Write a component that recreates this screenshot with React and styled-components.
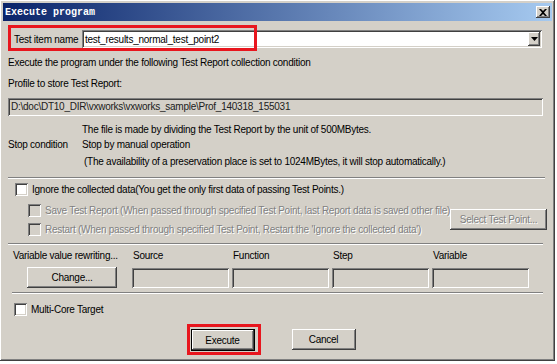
import React from 'react';
import styled, { createGlobalStyle, css } from 'styled-components';

const Global = createGlobalStyle`
  html, body { margin: 0; padding: 0; background: #ffffff; }
  body {
    font-family: "Liberation Sans", Arial, sans-serif;
    font-size: 10px;
    letter-spacing: -0.25px;
    color: #000;
  }
`;

const face = '#D4D0C8';

const raised = css`
  background: ${face};
  box-shadow: inset -1px -1px #404040, inset 1px 1px #ffffff, inset -2px -2px #808080, inset 2px 2px ${face};
`;

const sunken = css`
  box-shadow: inset 1px 1px #808080, inset -1px -1px #ffffff, inset 2px 2px #404040, inset -2px -2px ${face};
`;

const Window = styled.div`
  position: relative;
  width: 555px;
  height: 361px;
  box-sizing: border-box;
  padding: 3px;
  ${raised};
  display: flex;
  flex-direction: column;
  overflow: hidden;
`;

const TitleBar = styled.div`
  flex: none;
  height: 18px;
  display: flex;
  align-items: center;
  justify-content: space-between;
  padding: 0 2px 0 2px;
  background: linear-gradient(to right, #0a246a, #a6caf0);
`;

const TitleText = styled.span`
  font-family: "Liberation Mono", "Courier New", monospace;
  font-weight: bold;
  font-size: 10px;
  color: #ffffff;
  letter-spacing: 0;
`;

const CloseButton = styled.div`
  width: 14px;
  height: 12px;
  ${raised};
  display: flex;
  align-items: center;
  justify-content: center;
`;

const Body = styled.div`
  flex: 1;
  display: flex;
  flex-direction: column;
  padding-left: 5px;
`;

const ComboRow = styled.div`
  display: flex;
  align-items: center;
  margin-top: 9px;
  height: 18px;
  flex: none;
`;

const FieldLabel = styled.span`
  margin-left: 6px;
  width: 68px;
  white-space: nowrap;
`;

const Combo = styled.div`
  width: 460px;
  height: 18px;
  box-sizing: border-box;
  background: #fff;
  ${sunken};
  display: flex;
  align-items: center;
  justify-content: space-between;
  padding: 2px 2px 2px 3px;
  white-space: nowrap;
`;

const DropButton = styled.div`
  width: 12px;
  height: 14px;
  ${raised};
  display: flex;
  align-items: center;
  justify-content: center;
`;

const Line = styled.div`
  flex: none;
  height: 13px;
  line-height: 13px;
  margin-top: ${p => p.$mt || 0}px;
  padding-left: ${p => p.$pl || 0}px;
  white-space: nowrap;
`;

const PathBox = styled.div`
  flex: none;
  margin-top: 8px;
  width: 535px;
  height: 18px;
  box-sizing: border-box;
  ${sunken};
  padding: 3px 3px;
  line-height: 12px;
  color: #202020;
  white-space: nowrap;
`;

const StopRow = styled.div`
  flex: none;
  display: flex;
  height: 13px;
  line-height: 13px;
  margin-top: 2px;
  white-space: nowrap;
`;

const StopLabel = styled.span`
  width: 74px;
`;

const Separator = styled.div`
  flex: none;
  margin-top: ${p => p.$mt}px;
  margin-left: ${p => p.$ml || 0}px;
  width: ${p => p.$w}px;
  height: 0;
  border-top: 1px solid #808080;
  border-bottom: 1px solid #ffffff;
`;

const CheckRow = styled.label`
  flex: none;
  display: flex;
  align-items: center;
  height: 14px;
  margin-top: ${p => p.$mt || 0}px;
  padding-left: ${p => p.$pl || 0}px;
  gap: 4px;
  color: ${p => (p.$disabled ? '#808080' : '#000')};
  text-shadow: ${p => (p.$disabled ? '1px 1px #ffffff' : 'none')};
  white-space: nowrap;
`;

const Box = styled.span`
  width: 13px;
  height: 13px;
  box-sizing: border-box;
  flex: none;
  background: ${p => (p.$disabled ? face : '#fff')};
  ${sunken};
`;

const TestPointGroup = styled.div`
  flex: none;
  display: flex;
  align-items: center;
  justify-content: space-between;
  margin-top: 7px;
  width: 538px;
`;

const SubChecks = styled.div`
  display: flex;
  flex-direction: column;
  gap: 5px;
`;

const Button = styled.div`
  flex: none;
  width: ${p => p.$w}px;
  height: ${p => p.$h || 21}px;
  box-sizing: border-box;
  ${raised};
  display: flex;
  align-items: center;
  justify-content: center;
  white-space: nowrap;
  color: ${p => (p.$disabled ? '#808080' : '#000')};
  text-shadow: ${p => (p.$disabled ? '1px 1px #ffffff' : 'none')};
  ${p => p.$default && css`
    box-shadow: inset 0 0 0 1px #000, inset -2px -2px #404040, inset 2px 2px #ffffff, inset -3px -3px #808080;
  `}
`;

const VarGrid = styled.div`
  flex: none;
  display: grid;
  grid-template-columns: 124px 100px 100px 100px 100px;
  margin-top: 4px;
  align-items: end;
`;

const VarHead = styled.div`
  height: 14px;
  line-height: 14px;
  padding-left: ${p => p.$pl || 0}px;
  align-self: ${p => p.$self || 'end'};
  white-space: nowrap;
`;

const VarBox = styled.div`
  width: 97px;
  height: 20px;
  box-sizing: border-box;
  ${sunken};
  margin-top: 5px;
`;

const ChangeCell = styled.div`
  padding-left: 19px;
  margin-top: 3px;
`;

const Footer = styled.div`
  flex: none;
  display: flex;
  justify-content: center;
  gap: 37px;
  margin-top: 13px;
  padding-right: 14px;
`;

const Highlight = styled.div`
  position: absolute;
  left: ${p => p.$x}px;
  top: ${p => p.$y}px;
  width: ${p => p.$w}px;
  height: ${p => p.$h}px;
  box-sizing: border-box;
  border: 3px solid #e8161e;
  pointer-events: none;
`;

export default function App() {
  return (
    <>
      <Global />
      <Window>
        <TitleBar>
          <TitleText>Execute program</TitleText>
          <CloseButton>
            <svg width="8" height="7" viewBox="0 0 8 7">
              <path d="M0 0h2l2 2 2-2h2L5 3.5 8 7H6L4 5 2 7H0l3-3.5z" fill="#000" />
            </svg>
          </CloseButton>
        </TitleBar>
        <Body>
          <ComboRow>
            <FieldLabel>Test item name</FieldLabel>
            <Combo>
              <span>test_results_normal_test_point2</span>
              <DropButton>
                <svg width="7" height="4" viewBox="0 0 7 4">
                  <path d="M0 0h7L3.5 4z" fill="#000" />
                </svg>
              </DropButton>
            </Combo>
          </ComboRow>
          <Line $mt={8}>Execute the program under the following Test Report collection condition</Line>
          <Line $mt={8}>Profile to store Test Report:</Line>
          <PathBox>D:\doc\DT10_DIR\vxworks\vxworks_sample\Prof_140318_155031</PathBox>
          <Line $mt={7} $pl={74}>The file is made by dividing the Test Report by the unit of 500MBytes.</Line>
          <StopRow>
            <StopLabel>Stop condition</StopLabel>
            <span>Stop by manual operation</span>
          </StopRow>
          <Line $mt={4} $pl={76}>(The availability of a preservation place is set to 1024MBytes, it will stop automatically.)</Line>
          <Separator $mt={9} $w={537} />
          <CheckRow $mt={3} $pl={7}>
            <Box />
            <span>Ignore the collected data(You get the only first data of passing Test Points.)</span>
          </CheckRow>
          <TestPointGroup>
            <SubChecks>
              <CheckRow $pl={20} $disabled>
                <Box $disabled />
                <span>Save Test Report (When passed through specified Test Point, last Report data is saved other file)</span>
              </CheckRow>
              <CheckRow $pl={20} $disabled>
                <Box $disabled />
                <span>Restart (When passed through specified Test Point, Restart the 'Ignore the collected data')</span>
              </CheckRow>
            </SubChecks>
            <Button $w={97} $disabled>Select Test Point...</Button>
          </TestPointGroup>
          <Separator $mt={7} $w={535} />
          <VarGrid>
            <VarHead $pl={5} $self="start">Variable value rewriting...</VarHead>
            <VarHead $pl={1}>Source</VarHead>
            <VarHead $pl={1}>Function</VarHead>
            <VarHead $pl={1}>Step</VarHead>
            <VarHead $pl={1}>Variable</VarHead>
            <ChangeCell>
              <Button $w={90}>Change...</Button>
            </ChangeCell>
            <VarBox />
            <VarBox />
            <VarBox />
            <VarBox />
          </VarGrid>
          <Separator $mt={4} $ml={4} $w={531} />
          <CheckRow $mt={8} $pl={6}>
            <Box />
            <span>Multi-Core Target</span>
          </CheckRow>
          <Footer>
            <Button $w={64} $h={22} $default>Execute</Button>
            <Button $w={64} $h={21}>Cancel</Button>
          </Footer>
        </Body>
        <Highlight $x={8} $y={25} $w={249} $h={26} />
        <Highlight $x={187} $y={324} $w={74} $h={31} />
      </Window>
    </>
  );
}
